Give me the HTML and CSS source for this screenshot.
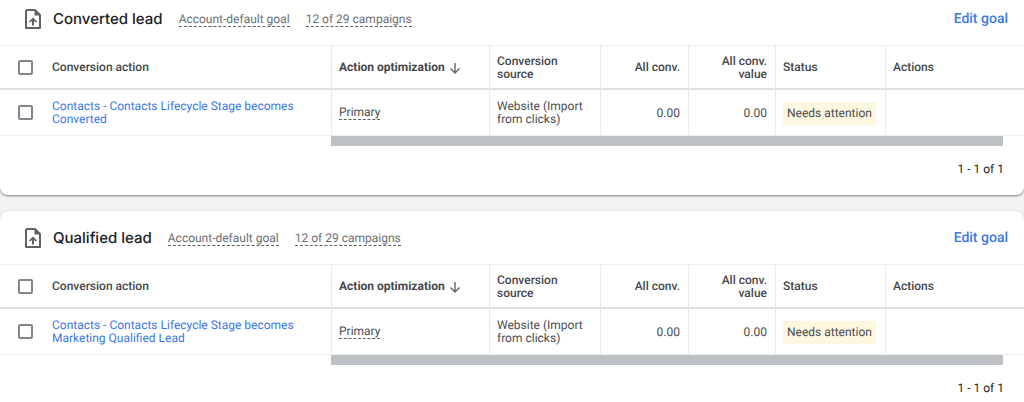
FILE: index.html
```html
<!DOCTYPE html>
<html lang="en">
<head>
<meta charset="utf-8">
<meta name="viewport" content="width=device-width, initial-scale=1">
<title>Conversion goals</title>
<link rel="stylesheet" href="styles.css">
</head>
<body>
<main class="goals">
  <section class="card">
    <header class="card-head">
      <svg class="goal-icon" viewBox="0 0 16 20" aria-hidden="true"><path fill="none" stroke="#5f6368" stroke-width="2" stroke-linejoin="round" d="M2 1h8l5 5v13H1V2z"/><path fill="#5f6368" d="M9.500 1v5.500H15zM8 8.500l4 4-1 1-2-1.500v4.500H7V12l-2 1.500-1-1z"/></svg>
      <h2 class="goal-title">Converted lead</h2>
      <span class="hint goal-meta">Account-default goal</span>
      <span class="hint goal-meta">12 of 29 campaigns</span>
      <a class="edit" href="#">Edit goal</a>
    </header>
    <table class="grid">
      <colgroup><col class="c-check"><col><col class="c-opt"><col class="c-source"><col class="c-conv"><col class="c-value"><col class="c-status"><col class="c-actions"></colgroup>
      <thead>
        <tr>
          <th class="check"><input type="checkbox" aria-label="Select all converted leads"></th>
          <th class="name">Conversion action</th>
          <th class="sorted"><span class="sort">Action optimization <svg class="arrow" viewBox="0 0 12 12" aria-hidden="true"><path d="M6 1v10M1.500 6.500L6 11l4.500-4.500"/></svg></span></th>
          <th>Conversion source</th>
          <th class="num">All conv.</th>
          <th class="num">All conv. value</th>
          <th>Status</th>
          <th>Actions</th>
        </tr>
      </thead>
      <tbody>
        <tr>
          <td class="check"><input type="checkbox" aria-label="Select Converted"></td>
          <td class="name"><a href="#">Contacts - Contacts Lifecycle Stage becomes Converted</a></td>
          <td><span class="hint">Primary</span></td>
          <td>Website (Import from clicks)</td>
          <td class="num">0.00</td>
          <td class="num">0.00</td>
          <td><span class="badge">Needs attention</span></td>
          <td></td>
        </tr>
      </tbody>
    </table>
    <div class="scrollbar"></div>
    <footer class="pager">1 - 1 of 1</footer>
  </section>

  <section class="card">
    <header class="card-head">
      <svg class="goal-icon" viewBox="0 0 16 20" aria-hidden="true"><path fill="none" stroke="#5f6368" stroke-width="2" stroke-linejoin="round" d="M2 1h8l5 5v13H1V2z"/><path fill="#5f6368" d="M9.500 1v5.500H15zM8 8.500l4 4-1 1-2-1.500v4.500H7V12l-2 1.500-1-1z"/></svg>
      <h2 class="goal-title">Qualified lead</h2>
      <span class="hint goal-meta">Account-default goal</span>
      <span class="hint goal-meta">12 of 29 campaigns</span>
      <a class="edit" href="#">Edit goal</a>
    </header>
    <table class="grid">
      <colgroup><col class="c-check"><col><col class="c-opt"><col class="c-source"><col class="c-conv"><col class="c-value"><col class="c-status"><col class="c-actions"></colgroup>
      <thead>
        <tr>
          <th class="check"><input type="checkbox" aria-label="Select all qualified leads"></th>
          <th class="name">Conversion action</th>
          <th class="sorted"><span class="sort">Action optimization <svg class="arrow" viewBox="0 0 12 12" aria-hidden="true"><path d="M6 1v10M1.500 6.500L6 11l4.500-4.500"/></svg></span></th>
          <th>Conversion source</th>
          <th class="num">All conv.</th>
          <th class="num">All conv. value</th>
          <th>Status</th>
          <th>Actions</th>
        </tr>
      </thead>
      <tbody>
        <tr>
          <td class="check"><input type="checkbox" aria-label="Select Marketing Qualified Lead"></td>
          <td class="name"><a href="#">Contacts - Contacts Lifecycle Stage becomes Marketing Qualified Lead</a></td>
          <td><span class="hint">Primary</span></td>
          <td>Website (Import from clicks)</td>
          <td class="num">0.00</td>
          <td class="num">0.00</td>
          <td><span class="badge">Needs attention</span></td>
          <td></td>
        </tr>
      </tbody>
    </table>
    <div class="scrollbar"></div>
    <footer class="pager">1 - 1 of 1</footer>
  </section>
</main>
</body>
</html>
```
FILE: styles.css
```css
* { box-sizing: border-box; }

body {
  margin: 0;
  background: #f1f3f4;
  color: #4a4d51;
  font: 12px/13px Roboto, "Liberation Sans", sans-serif;
  text-rendering: geometricPrecision;
  overflow: hidden;
}

.goals {
  display: flex;
  flex-direction: column;
  gap: 16px;
  margin-top: -8px;
}

.card {
  background: #fff;
  border-radius: 8px;
  box-shadow: 0 1px 2px rgba(60, 64, 67, .5), 0 1px 3px rgba(60, 64, 67, .2);
}

.card-head {
  display: flex;
  align-items: center;
  gap: 16px;
  height: 54px;
  padding: 0 16px 0 25px;
  border-bottom: 1px solid #eceef0;
}

.goal-icon {
  width: 16px;
  height: 20px;
  margin-right: -4px;
}

.goal-title {
  margin: 0;
  color: #202124;
  font: 500 15px/20px Inter, Roboto, sans-serif;
}

.hint {
  display: inline-block;
  border-bottom: 1px dashed #5f6368;
}

.goal-meta {
  padding-top: 2px;
  color: #6b6f74;
  line-height: 14px;
}

.edit {
  margin-left: auto;
  color: #3b78e7;
  font: 500 14px/20px Roboto, sans-serif;
  text-decoration: none;
}

.grid {
  width: 100%;
  table-layout: fixed;
  border-collapse: separate;
  border-spacing: 0;
}

.c-check { width: 44px; }
.c-opt { width: 158px; }
.c-source { width: 111px; }
.c-conv { width: 88px; }
.c-value { width: 87px; }
.c-status { width: 110px; }
.c-actions { width: 139px; }

.grid th,
.grid td {
  padding: 1px 8px 0 7px;
  border-left: 1px solid #e8eaed;
  border-bottom: 1px solid #eceef0;
  text-align: left;
  vertical-align: middle;
}

.grid th {
  height: 44px;
  border-bottom: 2px solid #dfe1e5;
  color: #44474b;
  font-weight: 500;
}

.grid td { height: 46px; }

.grid .check {
  padding: 0 0 0 18px;
  border-left: 0;
}

.grid .name {
  padding: 1px 8px 0;
  border-left: 0;
}

.grid .num { text-align: right; }
.grid .sorted { font-weight: 700; }

.name a {
  color: #3b78e7;
  text-decoration: none;
}

.check input {
  display: block;
  appearance: none;
  width: 15px;
  height: 15px;
  margin: 0;
  border: 2px solid #80868b;
  border-radius: 2px;
  background: #fff;
}

.sort {
  display: flex;
  align-items: center;
  gap: 4px;
  white-space: nowrap;
}

.arrow {
  width: 12px;
  height: 12px;
  fill: none;
  stroke: #5f6368;
  stroke-width: 1.4;
}

.badge {
  display: inline-block;
  padding: 0 4px;
  border-radius: 2px;
  background: #fef7e0;
  line-height: 23px;
  white-space: nowrap;
}

.scrollbar {
  width: 672px;
  height: 10px;
  margin: 0 21px 0 auto;
  background: #bdc1c6;
}

.pager {
  padding: 13px 20px 16px;
  color: #202124;
  line-height: 20px;
  text-align: right;
}
```
